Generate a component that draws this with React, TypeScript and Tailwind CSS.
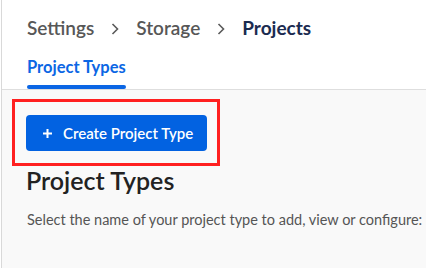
const crumbs = ['Settings', 'Storage'];

function Chevron() {
    return (
        <svg width="8" height="12" viewBox="0 0 8 12" className="mx-[17px] mt-[2px] shrink-0">
            <polyline points="1.5,1 6.5,6 1.5,11" fill="none" stroke="#5a5a5a" strokeWidth="1.6" />
        </svg>
    );
}

export default function App() {
    return (
        <div className="h-[268px] w-[426px] overflow-hidden bg-white font-['Lato',sans-serif]">
            <div className="ml-px h-full border-l border-[#d9d9d9] bg-[#f9f9f9]">
                <header className="border-b border-[#dedede] bg-white pl-[25px]">
                    <nav className="flex items-center pt-[16px] text-[19px] leading-[24px] font-semibold">
                        {crumbs.map((c) => (
                            <div key={c} className="flex items-center">
                                <span className="text-[#575757]">{c}</span>
                                <Chevron />
                            </div>
                        ))}
                        <span className="font-bold text-[#1b2b50]">Projects</span>
                    </nav>
                    <div className="mt-[17px] inline-flex flex-col">
                        <span className="text-[16.5px] leading-[20px] font-bold text-[#0b66e4]">
                            Project Types
                        </span>
                        <div className="mt-[8px] h-[4px] rounded-full bg-[#0b66e4]" />
                    </div>
                </header>

                <main>
                    <div className="mt-[9px] ml-[10px] h-[67px] w-[208px] border-[3px] border-[#ff2020]">
                        <button
                            type="button"
                            className="mt-[13px] ml-[11px] flex h-[36px] w-[181px] items-center gap-[11px] rounded-[4px] bg-[#0262e1] pl-[17px] text-[15px] font-semibold text-white"
                        >
                            <svg width="9" height="9" viewBox="0 0 9 9">
                                <path d="M4.5 0v9M0 4.5h9" stroke="white" strokeWidth="2" />
                            </svg>
                            Create Project Type
                        </button>
                    </div>
                    <h1 className="mt-[1px] ml-[24px] text-[25px] leading-[26px] font-semibold text-[#222]">
                        Project Types
                    </h1>
                    <p className="mt-[17px] ml-[25px] text-[14.5px] leading-[20px] whitespace-nowrap text-[#555]">
                        Select the name of your project type to add, view or configure:
                    </p>
                </main>
            </div>
        </div>
    );
}
